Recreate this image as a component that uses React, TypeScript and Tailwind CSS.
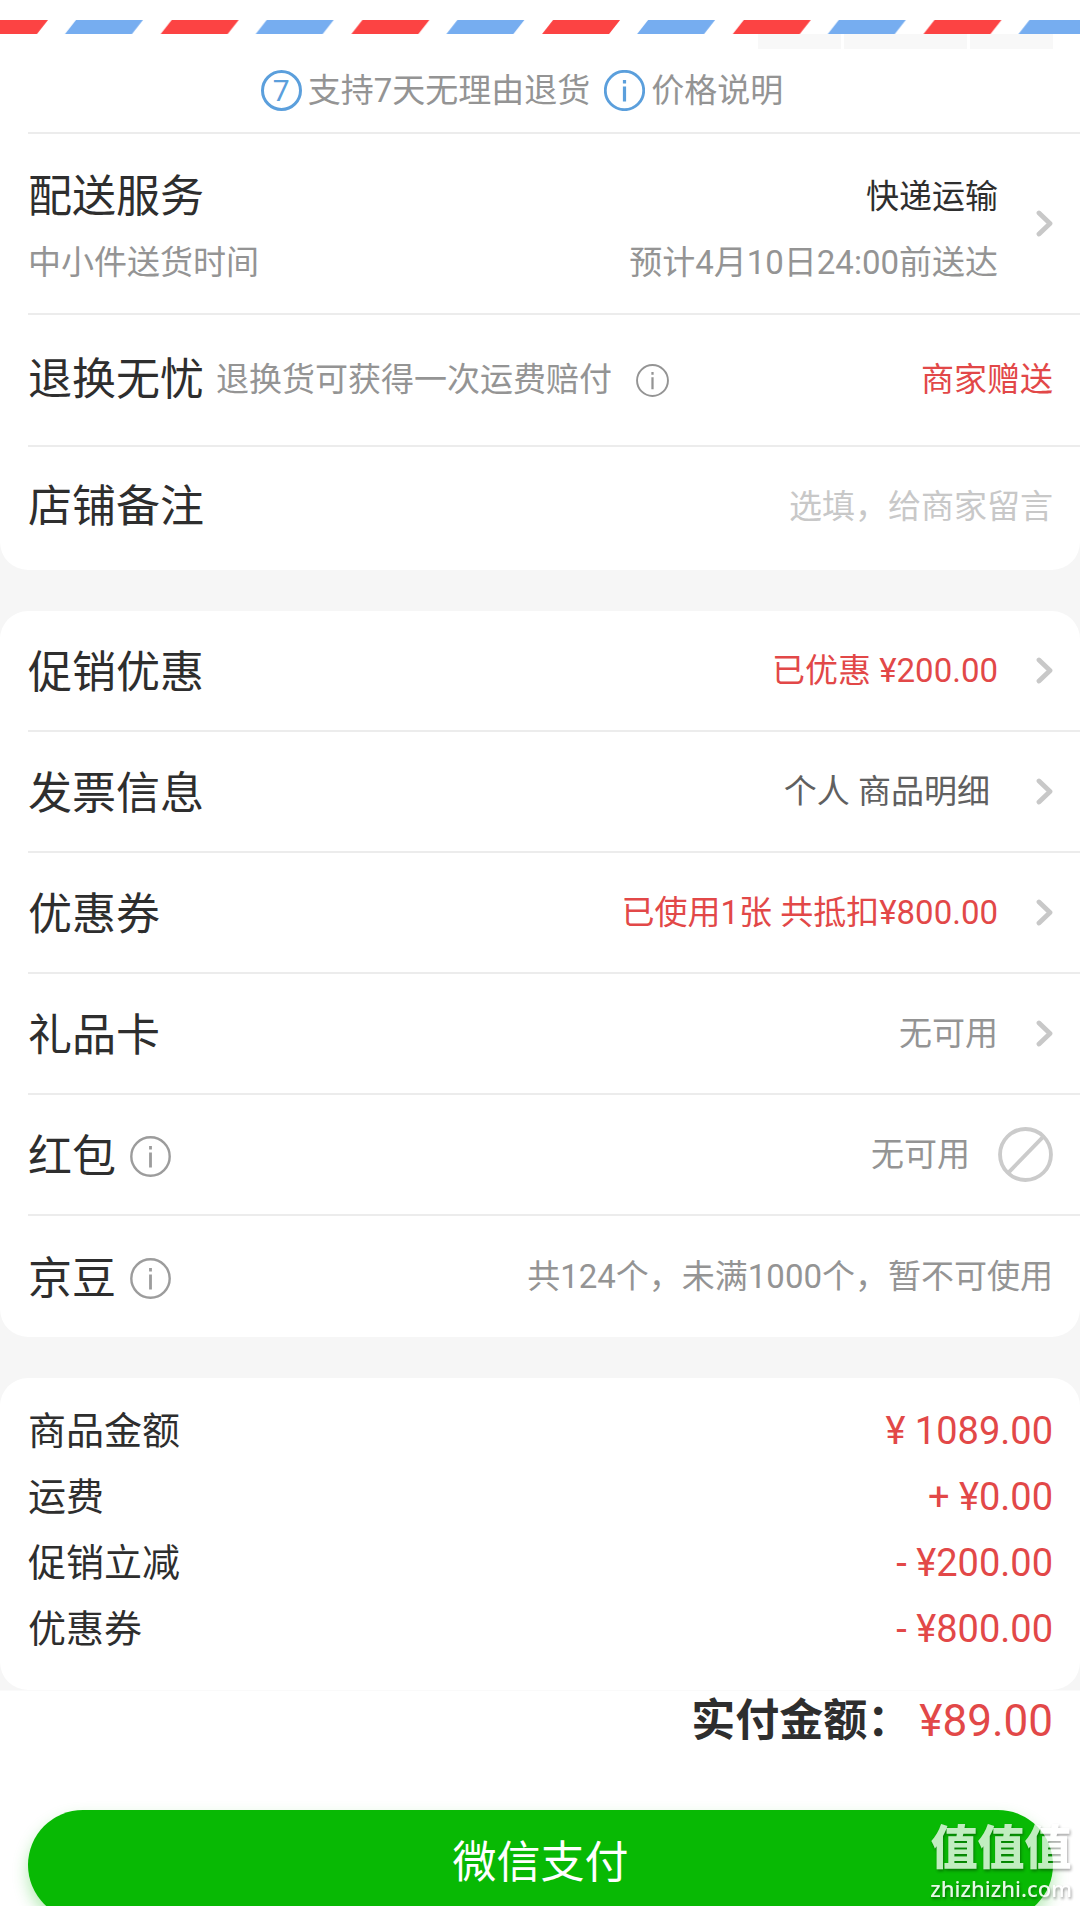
import type { ReactNode } from "react";

const RED = "text-[#e24848]";
const GRAY = "text-[#949494]";

function Airmail() {
  return (
    <svg className="block w-full h-3.5" aria-hidden="true">
      <defs>
        <pattern id="airmail" x="-30" width="190.7" height="14" patternUnits="userSpaceOnUse">
          <path d="M11 0H78L67 14H0Z" fill="#fc4343" />
          <path d="M106 0H173L162 14H95Z" fill="#76adf0" />
        </pattern>
      </defs>
      <rect width="100%" height="14" fill="url(#airmail)" />
    </svg>
  );
}

function InfoIcon({ className, ring = 2.4 }: { className: string; ring?: number }) {
  return (
    <svg className={`shrink-0 ${className}`} viewBox="0 0 41 41" fill="none" stroke="currentColor" aria-hidden="true">
      <circle cx="20.5" cy="20.5" r="19.2" strokeWidth={ring} />
      <path d="M20.5 10V13.5M20.5 16.5V31.5" strokeWidth={ring + 0.4} />
    </svg>
  );
}

function Chevron() {
  return (
    <svg className="ml-[38px] h-[27px] w-[17px] shrink-0" viewBox="0 0 17 27" aria-hidden="true">
      <path
        d="M3 3L14 13.5L3 24"
        fill="none"
        stroke="#c8c8c8"
        strokeWidth="4.8"
        strokeLinecap="round"
        strokeLinejoin="round"
      />
    </svg>
  );
}

function BanIcon() {
  return (
    <svg className="ml-7 size-[55px] shrink-0" viewBox="0 0 54 54" fill="none" stroke="#cbcbcb" strokeWidth="3.8" aria-hidden="true">
      <circle cx="27" cy="27" r="25" />
      <path d="M10 45L45 9" />
    </svg>
  );
}

function LinkRow({ title, children }: { title: string; children: ReactNode }) {
  return (
    <button type="button" className="flex h-[121px] w-full items-center border-b-2 border-[#ececec] pr-[27px] text-left">
      <span className="pt-1 text-[44px]">{title}</span>
      <span className="ml-auto text-[33px]">{children}</span>
      <Chevron />
    </button>
  );
}

const amounts = [
  { label: "商品金额", value: "¥ 1089.00" },
  { label: "运费", value: "+ ¥0.00" },
  { label: "促销立减", value: "- ¥200.00" },
  { label: "优惠券", value: "- ¥800.00" },
];

export default function App() {
  return (
    <main className="min-h-screen overflow-hidden bg-[#f6f6f6] font-['Roboto','Noto_Sans_CJK_SC',sans-serif] text-[#2e2e2e]">
      {/* Delivery */}
      <section className="rounded-b-[28px] bg-white pt-5">
        <Airmail />
        <div className="flex h-[15px] justify-end gap-[3px] pr-[27px]">
          <span className="w-[83px] bg-[#f8f8f8]" />
          <span className="w-[123px] bg-[#f8f8f8]" />
          <span className="w-[83px] bg-[#f8f8f8]" />
        </div>
        <div className="pl-7">
          <div className={`flex h-[85px] items-center justify-center gap-3.5 border-b-2 border-[#ececec] pr-16 text-[33px] ${GRAY}`}>
            <button type="button" className="flex items-center gap-1.5">
              <span className="flex size-[41px] items-center justify-center rounded-full border-3 border-[#5b9fdc] text-[30px] text-[#5b9fdc]">
                7
              </span>
              支持7天无理由退货
            </button>
            <button type="button" className="flex items-center gap-1.5">
              <InfoIcon className="size-[41px] text-[#5b9fdc]" ring={2.8} />
              价格说明
            </button>
          </div>

          <button type="button" className="flex h-[181px] w-full items-center border-b-2 border-[#ececec] pr-[27px] text-left">
            <span className="flex flex-col pt-3">
              <span className="text-[44px] leading-[66px]">配送服务</span>
              <span className={`text-[33px] leading-[66px] ${GRAY}`}>中小件送货时间</span>
            </span>
            <span className="ml-auto flex flex-col pt-3 text-right text-[33px] leading-[66px]">
              <span>快递运输</span>
              <span className={GRAY}>预计4月10日24:00前送达</span>
            </span>
            <Chevron />
          </button>

          <div className="flex h-[132px] items-center border-b-2 border-[#ececec] pr-[27px]">
            <span className="text-[44px]">退换无忧</span>
            <span className={`ml-3 text-[33px] ${GRAY}`}>退换货可获得一次运费赔付</span>
            <button type="button" aria-label="退换无忧说明" className={`ml-6 ${GRAY}`}>
              <InfoIcon className="block size-[33px]" />
            </button>
            <span className={`ml-auto text-[33px] ${RED}`}>商家赠送</span>
          </div>

          <div className="flex h-[123px] items-center pr-[27px] pb-1">
            <label htmlFor="note" className="text-[44px]">
              店铺备注
            </label>
            <input
              id="note"
              type="text"
              placeholder="选填，给商家留言"
              className="min-w-0 flex-1 text-right text-[33px] outline-none placeholder:text-[#c8c8c8]"
            />
          </div>
        </div>
      </section>

      {/* Discounts */}
      <section className="mt-[41px] rounded-[28px] bg-white pl-7">
        <LinkRow title="促销优惠">
          <span className={RED}>已优惠 ¥200.00</span>
        </LinkRow>
        <LinkRow title="发票信息">
          <span className="pr-2 text-[#606060]">个人 商品明细</span>
        </LinkRow>
        <LinkRow title="优惠券">
          <span className={RED}>已使用1张 共抵扣¥800.00</span>
        </LinkRow>
        <LinkRow title="礼品卡">
          <span className={GRAY}>无可用</span>
        </LinkRow>
        <div className="flex h-[121px] items-center border-b-2 border-[#ececec] pr-[27px]">
          <span className="pt-1 text-[44px]">红包</span>
          <button type="button" aria-label="红包说明" className="ml-3.5 pt-1 text-[#9c9c9c]">
            <InfoIcon className="block size-[41px]" />
          </button>
          <span className={`ml-auto text-[33px] ${GRAY}`}>无可用</span>
          <BanIcon />
        </div>
        <div className="flex h-[121px] items-center pr-[27px]">
          <span className="pt-1 text-[44px]">京豆</span>
          <button type="button" aria-label="京豆说明" className="ml-3.5 pt-1 text-[#9c9c9c]">
            <InfoIcon className="block size-[41px]" />
          </button>
          <span className={`ml-auto text-[33px] ${GRAY}`}>共124个，未满1000个，暂不可使用</span>
        </div>
      </section>

      {/* Amounts */}
      <dl className="mt-[41px] rounded-[28px] bg-white pt-5 pr-[27px] pb-7 pl-7 text-[38px] leading-[66px]">
        {amounts.map((item) => (
          <div key={item.label} className="flex justify-between">
            <dt>{item.label}</dt>
            <dd className={RED}>{item.value}</dd>
          </div>
        ))}
      </dl>

      {/* Payment */}
      <footer className="border-t border-[#fafafa] bg-white pr-[27px] pl-7 text-[44px]">
        <p className="flex h-[119px] items-start justify-end gap-2 leading-[60px]">
          <span className="font-bold">实付金额：</span>
          <span className={RED}>¥89.00</span>
        </p>
        <button
          type="button"
          className="h-[110px] w-full rounded-full bg-[#08b904] pb-1 text-white shadow-[0_8px_16px_rgba(8,185,4,0.3)]"
        >
          微信支付
        </button>
      </footer>

      <div className="fixed right-2 bottom-1 flex flex-col items-center text-white text-shadow-[1px_2px_3px_rgba(0,0,0,0.45)]">
        <span className="text-[47px] leading-[52px] font-black opacity-75">值值值</span>
        <span className="font-['Noto_Sans',sans-serif] text-[22px] leading-7 font-medium opacity-90">zhizhizhi.com</span>
      </div>
    </main>
  );
}
